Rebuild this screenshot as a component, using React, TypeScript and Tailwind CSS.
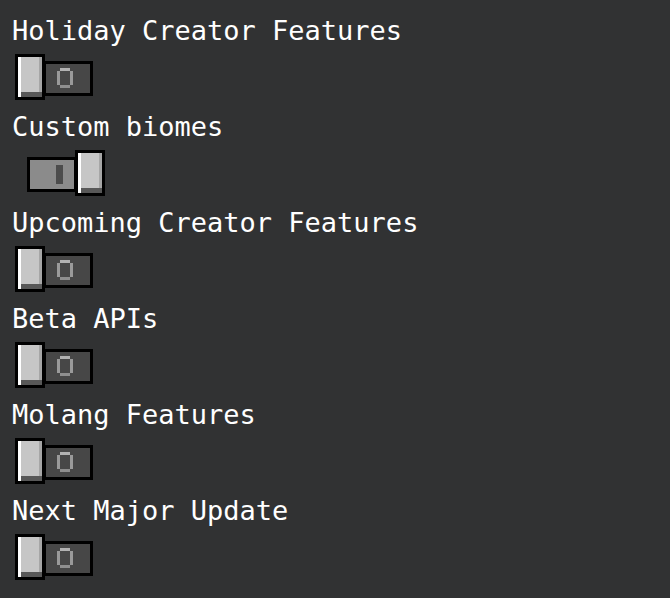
import { useState } from 'react';

interface Feature {
  label: string;
  enabled: boolean;
}

const initialFeatures: Feature[] = [
  { label: 'Holiday Creator Features', enabled: false },
  { label: 'Custom biomes', enabled: true },
  { label: 'Upcoming Creator Features', enabled: false },
  { label: 'Beta APIs', enabled: false },
  { label: 'Molang Features', enabled: false },
  { label: 'Next Major Update', enabled: false },
];

function Knob() {
  return (
    <div className="relative z-10 w-[30px] h-[46px] border-[3px] border-black bg-black shrink-0">
      <div className="w-full h-full bg-[#c6c6c6] shadow-[inset_3px_0_0_#ffffff,inset_0_-5px_0_#585858,inset_-3px_0_0_#a6a6a6]" />
    </div>
  );
}

function Toggle({ on, onClick }: { on: boolean; onClick: () => void }) {
  if (on) {
    return (
      <button className="flex items-start ml-[15px] w-fit" onClick={onClick}>
        <div className="mt-[7px] w-[50px] h-[35px] border-[3px] border-black bg-[#8b8b8b] -mr-[2px] pl-[26px] pt-[5px]">
          <div className="w-[7px] h-[19px] bg-[#4c4c4c]" />
        </div>
        <Knob />
      </button>
    );
  }
  return (
    <button className="flex items-start ml-[3px] w-fit" onClick={onClick}>
      <Knob />
      <div className="mt-[7px] w-[50px] h-[35px] border-[3px] border-black bg-[#474747] -ml-[2px] pl-[11px] pt-[4px]">
        <svg width="16" height="20" viewBox="0 0 16 20" className="block">
          <rect x="3" y="0" width="10" height="3" fill="#b2b2b2" />
          <rect x="3" y="17" width="10" height="3" fill="#8f8f8f" />
          <rect x="0" y="3" width="3" height="14" fill="#9a9a9a" />
          <rect x="13" y="3" width="3" height="14" fill="#9a9a9a" />
        </svg>
      </div>
    </button>
  );
}

export default function App() {
  const [features, setFeatures] = useState(initialFeatures);

  function toggleFeature(index: number) {
    setFeatures(features.map((f, i) => (i === index ? { ...f, enabled: !f.enabled } : f)));
  }

  return (
    <div className="min-h-screen bg-[#313233] pt-[15px] pl-[12px] font-['DejaVu_Sans_Mono',monospace] text-white">
      {features.map((feature, i) => (
        <div key={feature.label} className="flex flex-col h-[96px]">
          <div className="h-[32px] leading-[32px] text-[27px] whitespace-nowrap">{feature.label}</div>
          <div className="mt-[7px]">
            <Toggle on={feature.enabled} onClick={() => toggleFeature(i)} />
          </div>
        </div>
      ))}
    </div>
  );
}
